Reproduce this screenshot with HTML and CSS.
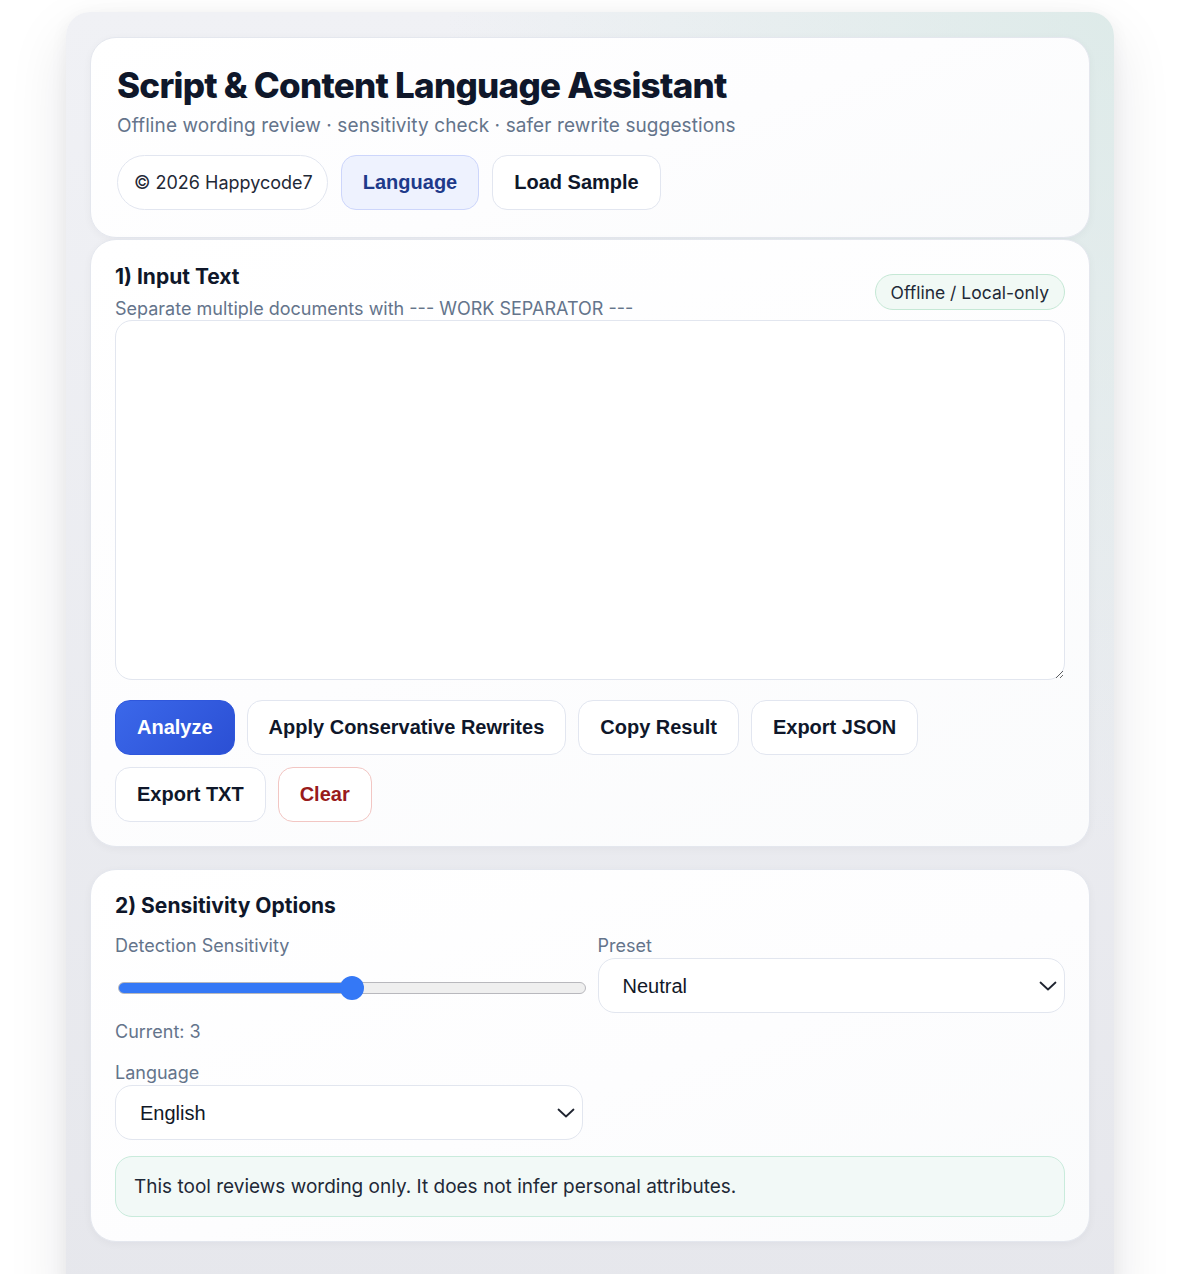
FILE: index.html
```html
<!DOCTYPE html>
<html lang="en">
<head>
<meta charset="utf-8">
<title>Script &amp; Content Language Assistant</title>
<link rel="stylesheet" href="styles.css">
</head>
<body>
<div class="shell">
  <header class="card header-card">
    <h1 class="title">Script &amp; Content Language Assistant</h1>
    <p class="subtitle">Offline wording review · sensitivity check · safer rewrite suggestions</p>
    <div class="chip-row">
      <span class="chip">© 2026 Happycode7</span>
      <button class="btn btn-lang">Language</button>
      <button class="btn">Load Sample</button>
    </div>
  </header>

  <section class="card input-card">
    <div class="section-head">
      <div>
        <h2 class="section-title">1) Input Text</h2>
        <p class="hint">Separate multiple documents with --- WORK SEPARATOR ---</p>
      </div>
      <span class="badge">Offline / Local-only</span>
    </div>
    <textarea class="textarea"></textarea>
    <div class="actions">
      <button class="btn btn-primary">Analyze</button>
      <button class="btn">Apply Conservative Rewrites</button>
      <button class="btn">Copy Result</button>
      <button class="btn">Export JSON</button>
      <button class="btn">Export TXT</button>
      <button class="btn btn-danger">Clear</button>
    </div>
  </section>

  <section class="card options-card">
    <h2 class="section-title">2) Sensitivity Options</h2>
    <div class="grid">
      <div class="field">
        <label class="label">Detection Sensitivity</label>
        <input class="range" type="range" min="1" max="5" value="3">
        <div class="current">Current: 3</div>
      </div>
      <div class="field">
        <label class="label">Preset</label>
        <div class="select-wrap">
          <select class="select"><option>Neutral</option></select>
          <svg class="chev" width="18" height="10" viewBox="0 0 18 10"><path d="M1.5 1.5 L9 8.5 L16.5 1.5" fill="none" stroke="#1f2430" stroke-width="1.8" stroke-linecap="round" stroke-linejoin="round"/></svg>
        </div>
      </div>
      <div class="field field-lang">
        <label class="label">Language</label>
        <div class="select-wrap">
          <select class="select"><option>English</option></select>
          <svg class="chev" width="18" height="10" viewBox="0 0 18 10"><path d="M1.5 1.5 L9 8.5 L16.5 1.5" fill="none" stroke="#1f2430" stroke-width="1.8" stroke-linecap="round" stroke-linejoin="round"/></svg>
        </div>
      </div>
    </div>
    <div class="note">This tool reviews wording only. It does not infer personal attributes.</div>
  </section>
</div>
</body>
</html>
```

FILE: styles.css
```css
* { box-sizing: border-box; }
html, body { margin: 0; padding: 0; background: #ffffff; }
body {
  font-family: Inter, "Noto Sans", sans-serif;
  color: #111827;
  padding-top: 12px;
}
.shell {
  width: 1048px;
  margin: 0 auto;
  padding: 25px 24px 40px;
  border-radius: 24px;
  background:
    radial-gradient(ellipse at 100% 0%, rgba(214, 232, 228, 0.7) 0%, rgba(214, 232, 228, 0) 45%),
    linear-gradient(180deg, #f0f1f5 0%, #e6e7ec 100%);
  box-shadow: 0 24px 60px rgba(15, 23, 42, 0.10), 0 4px 18px rgba(15, 23, 42, 0.05);
  min-height: 1300px;
}
.card {
  background: linear-gradient(160deg, #ffffff 0%, #fdfdfe 55%, #fafbfc 100%);
  border: 1px solid #e4e7ee;
  border-radius: 26px;
  box-shadow: 0 2px 8px rgba(15, 23, 42, 0.04);
}
.header-card {
  padding: 26px 26px 26px;
  height: 201px;
}
.title {
  margin: 0;
  font-size: 35px;
  line-height: 42px;
  font-weight: 800;
  letter-spacing: -0.75px;
  color: #0f172a;
}
.subtitle {
  margin: 7px 0 0;
  font-size: 19px;
  line-height: 26px;
  letter-spacing: 0.1px;
  color: #64748b;
}
.chip-row {
  display: flex;
  gap: 13px;
  margin-top: 16px;
  align-items: center;
}
.chip {
  display: inline-flex;
  align-items: center;
  height: 55px;
  padding: 0 14px 0 16px;
  border: 1px solid #e2e6f0;
  border-radius: 28px;
  background: #ffffff;
  font-size: 18px;
  color: #1f2937;
}
.btn {
  font-family: "Liberation Sans", Arial, sans-serif;
  font-weight: 700;
  font-size: 20px;
  line-height: 23px;
  height: 55px;
  padding: 0 21px;
  border: 1px solid #e2e6f0;
  border-radius: 15px;
  background: #ffffff;
  color: #0f172a;
  cursor: pointer;
}
.btn-lang {
  background: #eef2fe;
  border-color: #cdd6fb;
  color: #1e3a8a;
}
.btn-primary {
  background: linear-gradient(135deg, #3b68ea 0%, #2b4fd4 100%);
  border-color: #2f57dc;
  color: #ffffff;
}
.btn-danger {
  border-color: #f2c6c3;
  color: #991b1b;
}
.input-card {
  margin-top: 1px;
  padding: 23px 24px 24px;
}
.section-head {
  display: flex;
  justify-content: space-between;
  align-items: flex-end;
}
.section-title {
  margin: 0;
  font-size: 21px;
  line-height: 28px;
  font-weight: 700;
  color: #0f172a;
}
.hint {
  margin: 7px 0 0;
  font-size: 18px;
  line-height: 22px;
  color: #64748b;
}
.badge {
  display: inline-flex;
  align-items: center;
  height: 36px;
  padding: 0 15px;
  margin-bottom: 10px;
  border: 1px solid #c5e8d5;
  border-radius: 19px;
  background: #f1f9f5;
  font-size: 17.5px;
  color: #1f2937;
}
.textarea {
  display: block;
  width: 100%;
  height: 360px;
  margin-top: 0;
  border: 1px solid #e2e6ef;
  border-radius: 17px;
  background: #ffffff;
  font-family: Inter, sans-serif;
  font-size: 16px;
  resize: vertical;
}
.actions {
  display: flex;
  flex-wrap: wrap;
  gap: 12px;
  margin-top: 20px;
  width: 820px;
}
.options-card {
  margin-top: 22px;
  padding: 22px 24px 24px;
}
.grid {
  display: grid;
  grid-template-columns: minmax(0, 1fr) minmax(0, 1fr);
  column-gap: 15px;
  row-gap: 0;
  margin-top: 15px;
}
.field { display: flex; flex-direction: column; min-width: 0; }
.label {
  font-size: 18px;
  line-height: 22px;
  color: #64748b;
}
.range {
  -webkit-appearance: none;
  appearance: none;
  width: 468px;
  height: 12px;
  margin: 25px 0 0 3px;
  border-radius: 6px;
  border: 1px solid #b8b8bd;
  background: linear-gradient(90deg, #3478f6 0%, #3478f6 50%, #efefef 50%, #efefef 100%);
}
.range::-webkit-slider-thumb {
  -webkit-appearance: none;
  appearance: none;
  width: 24px;
  height: 24px;
  border-radius: 50%;
  background: #3478f6;
  border: none;
}
.current {
  margin-top: 27px;
  font-size: 18px;
  line-height: 22px;
  color: #64748b;
}
.field-lang { margin-top: 19px; }
.select-wrap { position: relative; margin-top: 1px; }
.select {
  -webkit-appearance: none;
  appearance: none;
  width: 100%;
  height: 55px;
  padding: 0 24px;
  border: 1px solid #e2e6ef;
  border-radius: 17px;
  background: #ffffff;
  font-family: "Liberation Sans", Arial, sans-serif;
  font-size: 20px;
  color: #111827;
}
.chev {
  position: absolute;
  right: 8px;
  top: 23px;
}
.note {
  margin-top: 16px;
  padding: 17px 18px;
  border: 1px solid #c9ebdc;
  border-radius: 17px;
  background: #f2f9f7;
  font-size: 19px;
  line-height: 25px;
  color: #1f2937;
}
```
